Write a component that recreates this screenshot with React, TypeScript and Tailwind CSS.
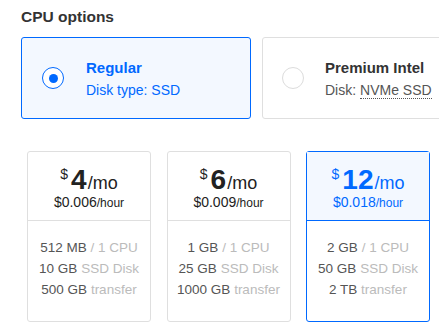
import React from "react";

const plans = [
  { price: "4", hour: "$0.006", mem: "512 MB", disk: "10 GB", transfer: "500 GB", selected: false },
  { price: "6", hour: "$0.009", mem: "1 GB", disk: "25 GB", transfer: "1000 GB", selected: false },
  { price: "12", hour: "$0.018", mem: "2 GB", disk: "50 GB", transfer: "2 TB", selected: true },
];

export default function App() {
  return (
    <div
      className="w-[439px] h-[331px] overflow-hidden bg-white"
      style={{ fontFamily: '"Liberation Sans", Arial, sans-serif' }}
    >
      <div className="pl-[21px] pt-[7px]">
        <h2 className="text-[15.5px] font-bold leading-[20px] text-[#333]">CPU options</h2>
        <div className="mt-[10px] flex gap-[11px] w-[600px]">
          <div className="w-[230px] h-[82px] shrink-0 rounded-[3px] border border-[#0069ff] bg-[#f3f8ff] flex items-center">
            <div className="ml-[20px] w-[22px] h-[22px] rounded-full border border-[#0069ff] bg-white flex items-center justify-center">
              <div className="w-[9px] h-[9px] rounded-full bg-[#0069ff]" />
            </div>
            <div className="ml-[22px] flex flex-col">
              <span className="text-[15px] font-bold leading-[20px] text-[#0069ff]">Regular</span>
              <span className="mt-[3px] text-[14px] leading-[18px] text-[#0069ff]">Disk type: SSD</span>
            </div>
          </div>
          <div className="w-[230px] h-[82px] shrink-0 rounded-[3px] border border-[#dfdfdf] bg-white flex items-center">
            <div className="ml-[19px] w-[22px] h-[22px] rounded-full border border-[#dcdcdc] bg-white" />
            <div className="ml-[21px] flex flex-col">
              <span className="text-[15px] font-bold leading-[20px] text-[#333]">Premium Intel</span>
              <span className="mt-[3px] text-[14px] leading-[18px] text-[#555]">
                Disk:{" "}
                <span className="border-b border-dotted border-[#555]">NVMe SSD</span>
              </span>
            </div>
          </div>
        </div>
      </div>
      <div className="ml-[27px] mt-[32px] flex gap-[15.5px]">
        {plans.map((p) => {
          const blue = p.selected;
          return (
            <div
              key={p.price}
              className={
                "w-[124px] h-[171px] shrink-0 rounded-[3px] border flex flex-col " +
                (blue ? "border-[#0069ff]" : "border-[#dfdfdf]")
              }
            >
              <div
                className={
                  "h-[69px] pt-[14px] flex flex-col items-center border-b " +
                  (blue ? "border-[#0069ff] bg-[#f3f8ff] text-[#0069ff]" : "border-[#dfdfdf] text-[#222]")
                }
              >
                <div className="flex items-baseline leading-none">
                  <span className="text-[14px] relative top-[-10px] mr-[3px]">$</span>
                  <span className="text-[28px] font-bold">{p.price}</span>
                  <span className="text-[18px] ml-[1px]">/mo</span>
                </div>
                <div className="mt-[0px] leading-none">
                  <span className="text-[14px]">{p.hour}</span>
                  <span className="text-[12px]">/hour</span>
                </div>
              </div>
              <div className="pt-[16px] flex flex-col items-center text-[13.5px] leading-[21px]">
                <div>
                  <span className="text-[#555]">{p.mem}</span>
                  <span className="text-[#bbb]"> / 1 CPU</span>
                </div>
                <div>
                  <span className="text-[#555]">{p.disk}</span>
                  <span className="text-[#bbb]"> SSD Disk</span>
                </div>
                <div>
                  <span className="text-[#555]">{p.transfer}</span>
                  <span className="text-[#bbb]"> transfer</span>
                </div>
              </div>
            </div>
          );
        })}
      </div>
    </div>
  );
}
